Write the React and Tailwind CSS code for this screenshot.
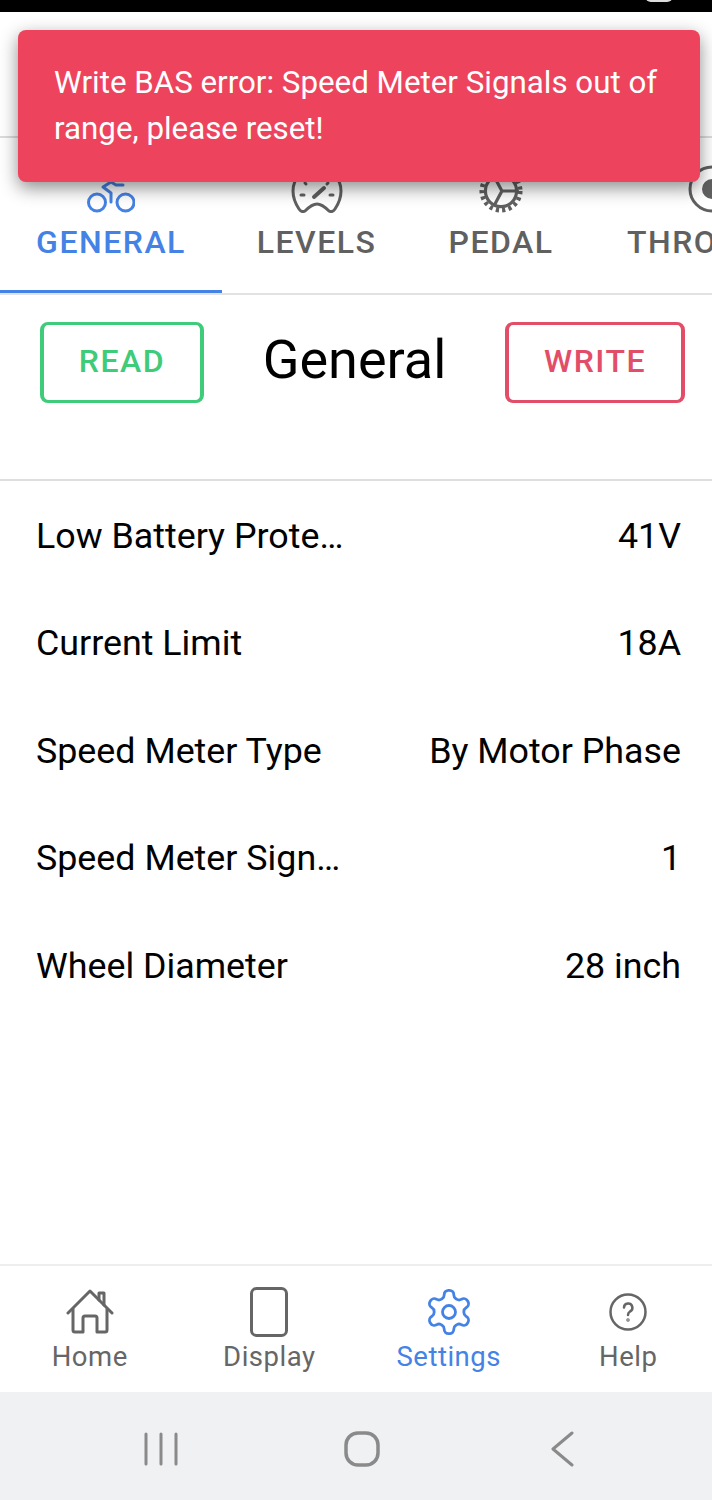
const settings = [
  { label: 'Low Battery Protection', value: '41V' },
  { label: 'Current Limit', value: '18A' },
  { label: 'Speed Meter Type', value: 'By Motor Phase' },
  { label: 'Speed Meter Signals', value: '1' },
  { label: 'Wheel Diameter', value: '28 inch' },
]

function BikeIcon() {
  return (
    <svg width="48" height="48" viewBox="0 0 48 48" fill="none" stroke="currentColor" strokeWidth="3" strokeLinecap="round" strokeLinejoin="round">
      <circle cx="10" cy="37.500" r="8.500" />
      <circle cx="38.500" cy="37.500" r="8.500" />
      <path d="M24 37V28l-8-6 8-5 5 3h7" />
    </svg>
  )
}

function GaugeIcon() {
  return (
    <svg width="52" height="48" viewBox="0 0 52 48" fill="none" stroke="currentColor" strokeWidth="3" strokeLinecap="round" strokeLinejoin="round">
      <path d="M8 44C4 38 2 32 2 26 2 13 13 2 26 2s24 11 24 24c0 6-2 12-6 18-2 3-4 3-6 2-3-3-7-7-12-7s-9 4-12 7c-2 1-4 1-6-2z" />
      <path d="M10 30h3M39 30h3M14 18l1 1M37 18l-1 1" />
      <path d="M23 32l10-9" strokeWidth="4" />
    </svg>
  )
}

function CogIcon() {
  return (
    <svg width="44" height="44" viewBox="0 0 48 48" fill="none" stroke="currentColor" strokeLinecap="round">
      <circle cx="24" cy="24" r="17" strokeWidth="3.500" />
      <circle cx="24" cy="24" r="21" strokeWidth="5" strokeDasharray="3.500 3.500" strokeLinecap="butt" />
      <path d="M25 24l-8-15M25 24h17M25 24l-8 15" strokeWidth="3.500" />
    </svg>
  )
}

function ThrottleIcon() {
  return (
    <svg width="48" height="48" viewBox="0 0 48 48" fill="none">
      <circle cx="24" cy="24" r="22" stroke="currentColor" strokeWidth="3" />
      <circle cx="24" cy="24" r="10" fill="currentColor" />
    </svg>
  )
}

function HomeIcon() {
  return (
    <svg width="48" height="48" viewBox="0 0 48 48" fill="none" stroke="currentColor" strokeWidth="3" strokeLinecap="round" strokeLinejoin="round">
      <path d="M2 25 24 3l22 22" />
      <path d="M33 12V5h5v12" />
      <path d="M7 21v21a2 2 0 0 0 2 2h8V30a2 2 0 0 1 2-2h10a2 2 0 0 1 2 2v14h8a2 2 0 0 0 2-2V21" />
    </svg>
  )
}

function GearIcon() {
  return (
    <svg width="52" height="52" viewBox="0 0 24 24" fill="none" stroke="currentColor" strokeWidth="1.300" strokeLinecap="round" strokeLinejoin="round">
      <path d="M12.220 2h-.44a2 2 0 0 0-2 2v.18a2 2 0 0 1-1 1.730l-.43.25a2 2 0 0 1-2 0l-.15-.08a2 2 0 0 0-2.730.73l-.22.38a2 2 0 0 0 .73 2.730l.15.1a2 2 0 0 1 1 1.720v.51a2 2 0 0 1-1 1.740l-.15.09a2 2 0 0 0-.73 2.730l.22.38a2 2 0 0 0 2.730.73l.15-.08a2 2 0 0 1 2 0l.43.25a2 2 0 0 1 1 1.730V20a2 2 0 0 0 2 2h.44a2 2 0 0 0 2-2v-.18a2 2 0 0 1 1-1.730l.43-.25a2 2 0 0 1 2 0l.15.08a2 2 0 0 0 2.730-.73l.22-.39a2 2 0 0 0-.73-2.730l-.15-.08a2 2 0 0 1-1-1.740v-.5a2 2 0 0 1 1-1.740l.15-.09a2 2 0 0 0 .73-2.730l-.22-.38a2 2 0 0 0-2.730-.73l-.15.08a2 2 0 0 1-2 0l-.43-.25a2 2 0 0 1-1-1.730V4a2 2 0 0 0-2-2z" />
      <circle cx="12" cy="12" r="3" />
    </svg>
  )
}

function HelpIcon() {
  return (
    <svg width="38" height="38" viewBox="0 0 38 38" fill="none" stroke="currentColor" strokeWidth="2.500" strokeLinecap="round" strokeLinejoin="round">
      <circle cx="19" cy="19" r="17.500" />
      <path d="M15 14.500a4.200 4.200 0 1 1 6 4c-1.300.8-2 1.700-2 3.500" />
      <circle cx="19" cy="27" r="0.500" fill="currentColor" />
    </svg>
  )
}

function Tab({ icon, label, active, width }) {
  return (
    <div className={`${width} shrink-0 flex flex-col items-center ${active ? 'text-[#4582e6]' : 'text-[#606060]'}`}>
      <div className="h-[48px] flex items-end">{icon}</div>
      <span className="mt-[11px] text-[32px] leading-[36px] font-medium tracking-[1.5px] whitespace-nowrap">{label}</span>
    </div>
  )
}

function NavItem({ icon, label, active }) {
  return (
    <div className={`w-[179.500px] shrink-0 flex flex-col items-center ${active ? 'text-[#4582e6]' : 'text-[#666666]'}`}>
      <div className="h-[50px] flex items-center justify-center">{icon}</div>
      <span className="mt-[4px] text-[27.500px] leading-[32px] tracking-[0.5px]">{label}</span>
    </div>
  )
}

export default function App() {
  return (
    <div className="relative w-[712px] h-[1500px] overflow-hidden flex flex-col bg-white font-['Roboto',sans-serif]">
      <div className="relative h-3 shrink-0 bg-black overflow-hidden">
        <div className="absolute left-[645px] top-[-10px] w-[28px] h-[12px] rounded-full bg-[#dddddd]"></div>
      </div>
      <div className="h-[126px] shrink-0 bg-white border-b-2 border-[#dcdcdc]"></div>

      <div className="h-[157px] shrink-0 flex overflow-hidden relative pt-[27px] border-b-2 border-[#e2e2e2]">
        <Tab icon={<BikeIcon />} label="GENERAL" active width="w-[222px]" />
        <Tab icon={<GaugeIcon />} label="LEVELS" width="w-[189px]" />
        <Tab icon={<CogIcon />} label="PEDAL" width="w-[180px]" />
        <Tab icon={<ThrottleIcon />} label="THROTTLE" width="px-[36px]" />
        <div className="absolute left-0 bottom-0 w-[222px] h-[3px] bg-[#4582e6]"></div>
      </div>

      <div className="h-[186px] shrink-0 border-b-2 border-[#dedede] pt-[27px] pl-[40px] pr-[27px] flex items-start justify-between">
        <button className="w-[164px] h-[81px] pb-[3px] rounded-lg border-y-[3px] border-x-4 border-[#3ecb7a] text-[#3ecb7a] text-[32px] font-medium tracking-[1.5px]">READ</button>
        <h1 className="text-[54px] leading-[76px] text-black">General</h1>
        <button className="w-[180px] h-[81px] pb-[3px] rounded-lg border-y-[3px] border-x-4 border-[#e24e68] text-[#e24e68] text-[32px] font-medium tracking-[1.5px]">WRITE</button>
      </div>

      <div className="flex-1 pt-[2px] pl-[36px] pr-[31px]">
        {settings.map((row) => (
          <div key={row.label} className="h-[107.500px] flex items-center justify-between text-[35.800px] text-black">
            <span className="max-w-[310px] truncate">{row.label}</span>
            <span className="whitespace-nowrap">{row.value}</span>
          </div>
        ))}
      </div>

      <div className="h-[128px] shrink-0 border-t-2 border-[#eeeeee] pt-[21px] flex overflow-hidden">
        <NavItem icon={<HomeIcon />} label="Home" />
        <NavItem
          icon={
            <svg width="38" height="50" viewBox="0 0 38 50" fill="none" stroke="currentColor" strokeWidth="3">
              <rect x="1.500" y="1.500" width="35" height="47" rx="5" />
            </svg>
          }
          label="Display"
        />
        <NavItem icon={<GearIcon />} label="Settings" active />
        <NavItem icon={<HelpIcon />} label="Help" />
      </div>

      <div className="h-[108px] shrink-0 bg-[#f0f1f3] pt-[5px] flex items-center text-[#8a8a8a]">
        <svg className="ml-[144px]" width="34" height="34" viewBox="0 0 34 34" fill="none" stroke="currentColor" strokeWidth="3" strokeLinecap="round">
          <path d="M2 2v30M17 2v30M32 2v30" />
        </svg>
        <svg className="ml-[166px]" width="36" height="36" viewBox="0 0 36 36" fill="none" stroke="currentColor" strokeWidth="3.500">
          <rect x="2" y="2" width="32" height="32" rx="12" />
        </svg>
        <svg className="ml-[170px]" width="24" height="36" viewBox="0 0 24 36" fill="none" stroke="currentColor" strokeWidth="3" strokeLinecap="round" strokeLinejoin="round">
          <path d="M22 2 3 18l19 16" />
        </svg>
      </div>

      <div className="absolute left-[18px] top-[30px] w-[682px] h-[152px] rounded-lg bg-[#ee435d] pl-[36px] py-[30px] text-white text-[31.300px] leading-[46px] shadow-[0_6px_18px_rgba(0,0,0,0.45)]">
        Write BAS error: Speed Meter Signals out of range, please reset!
      </div>
    </div>
  )
}
